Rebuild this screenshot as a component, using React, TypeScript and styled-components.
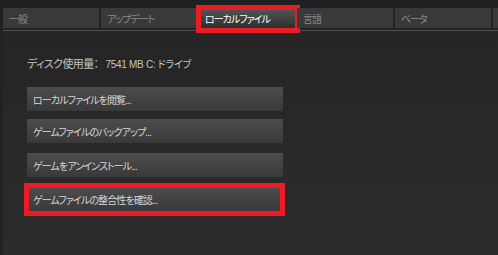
import React from 'react';
import styled, { createGlobalStyle, css } from 'styled-components';

const GlobalStyle = createGlobalStyle`
  html, body {
    margin: 0;
    padding: 0;
    background: #222222;
  }
  body {
    font-family: "Liberation Sans", "Noto Sans CJK JP", sans-serif;
    font-feature-settings: "palt";
  }
`;

const tabs = ['一般', 'アップデート', 'ローカルファイル', '言語', 'ベータ', ''];
const actions = [
  'ローカルファイルを閲覧...',
  'ゲームファイルのバックアップ...',
  'ゲームをアンインストール...',
  'ゲームファイルの整合性を確認...',
];

const App = () => {
  return (
    <>
      <GlobalStyle />
      <Window>
        <TabStrip>
          <TabRow>
            {tabs.map((label, i) => (
              <Tab key={i} active={i === 2}>
                {label}
                {i === 2 && <Highlight tab />}
              </Tab>
            ))}
          </TabRow>
        </TabStrip>
        <Panel>
          <DiskUsage>
            <span>ディスク使用量：</span>
            <DiskValue>7541 MB C: ドライブ</DiskValue>
          </DiskUsage>
          <ButtonList>
            {actions.map((label, i) => (
              <ActionButton key={label} spaced={i >= 2}>
                {label}
                {i === 3 && <Highlight />}
              </ActionButton>
            ))}
          </ButtonList>
        </Panel>
      </Window>
    </>
  );
};

const Window = styled.div`
  width: 498px;
  height: 255px;
  display: flex;
  flex-direction: column;
  overflow: hidden;
  background: #222222;
`;

const TabStrip = styled.div`
  background: #1f2022;
  padding: 8px 0 0 3px;
`;

const TabRow = styled.div`
  display: flex;
  gap: 2px;
  padding-bottom: 2px;
  border-bottom: 1px solid #4f4f4f;
  background: #242424;
`;

const Tab = styled.div<{ active?: boolean }>`
  position: relative;
  flex: 0 0 96px;
  height: 20px;
  box-sizing: border-box;
  padding: 0 6px;
  display: flex;
  align-items: center;
  font-size: 10px;
  letter-spacing: -1px;
  color: #8a8a8a;
  background: #393939;
  white-space: nowrap;
  ${(props) =>
    props.active &&
    css`
      color: #ffffff;
      background: linear-gradient(to bottom, #565656, #2e2e2e);
    `};
`;

const Panel = styled.div`
  flex: 1;
  margin-left: 3px;
  padding: 26px 0 0 24px;
  background: linear-gradient(to bottom, #252525, #2c2c2c);
`;

const DiskUsage = styled.div`
  display: flex;
  align-items: baseline;
  font-size: 11px;
  line-height: 14px;
  letter-spacing: -0.6px;
  color: #c4c4c4;
`;

const DiskValue = styled.span`
  margin-left: 7px;
  font-size: 10px;
  letter-spacing: -0.3px;
`;

const ButtonList = styled.div`
  display: flex;
  flex-direction: column;
  gap: 8px;
  margin-top: 15px;
`;

const ActionButton = styled.div<{ spaced?: boolean }>`
  position: relative;
  width: 256px;
  height: 24px;
  box-sizing: border-box;
  padding: 0 6px;
  display: flex;
  align-items: center;
  font-size: 10px;
  letter-spacing: -0.9px;
  color: #d6d6d6;
  background: linear-gradient(to bottom, #4d4d4d, #393939);
  ${(props) =>
    props.spaced &&
    css`
      margin-top: 2px;
    `};
`;

const Highlight = styled.span<{ tab?: boolean }>`
  position: absolute;
  top: -4px;
  right: -2px;
  bottom: -5px;
  left: -3px;
  border: 5px solid #ed1c24;
  pointer-events: none;
  ${(props) =>
    props.tab &&
    css`
      top: -3px;
      right: -5px;
      bottom: -5px;
      left: -3px;
    `};
`;

export default App;
